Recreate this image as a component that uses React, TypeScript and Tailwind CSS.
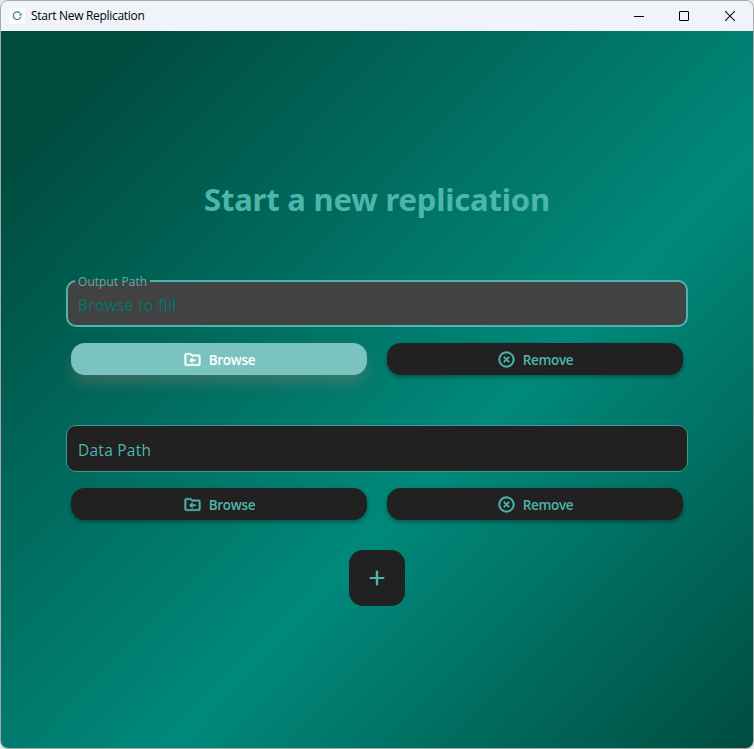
import type { ReactNode } from "react";

function FolderIcon() {
  return (
    <svg viewBox="0 0 24 24" className="size-[19px] shrink-0" fill="currentColor" stroke="currentColor" strokeWidth="0.5">
      <path d="M20 6h-8l-2-2H4c-1.1 0-2 .9-2 2v12c0 1.1.9 2 2 2h16c1.1 0 2-.9 2-2V8c0-1.1-.9-2-2-2zm0 12H4V6h5.17l2 2H20v10zm-8-1-4-4 4-4v3h4v2h-4z" />
    </svg>
  );
}

function RemoveIcon() {
  return (
    <svg viewBox="0 0 24 24" className="size-[19px] shrink-0" fill="currentColor" stroke="currentColor" strokeWidth="0.5">
      <path d="M14.59 8 12 10.59 9.41 8 8 9.41 10.59 12 8 14.59 9.41 16 12 13.41 14.59 16 16 14.59 13.41 12 16 9.41 14.59 8zM12 2C6.47 2 2 6.47 2 12s4.47 10 10 10 10-4.47 10-10S17.53 2 12 2zm0 18c-4.41 0-8-3.59-8-8s3.59-8 8-8 8 3.59 8 8-3.59 8-8 8z" />
    </svg>
  );
}

function PathButton({ icon, label, hovered = false }: { icon: ReactNode; label: string; hovered?: boolean }) {
  return (
    <button
      className={
        "flex h-8 w-[296px] items-center justify-center gap-[7px] rounded-[14px] text-[13.5px] leading-5 font-semibold " +
        (hovered
          ? "bg-[#7bc3bf] tracking-[-0.3px] text-white shadow-[0_9px_14px_-1px_rgba(130,122,115,0.42)]"
          : "bg-[#212121] tracking-[-0.3px] text-[#4db6ac] shadow-[0_2px_4px_rgba(0,0,0,0.35)]")
      }
    >
      {icon}
      <span className="relative top-px">{label}</span>
    </button>
  );
}

function ButtonRow({ hovered = false }: { hovered?: boolean }) {
  return (
    <div className="flex gap-5 px-[5px]">
      <PathButton icon={<FolderIcon />} label="Browse" hovered={hovered} />
      <PathButton icon={<RemoveIcon />} label="Remove" />
    </div>
  );
}

function TitleBar() {
  return (
    <header className="flex h-[30px] shrink-0 items-center bg-[#f0f3fa] pl-2 text-black">
      <span className="flex size-4 items-center justify-center bg-[#fbfcfd]">
        <svg viewBox="0 0 16 16" className="size-4" fill="none" stroke="#378486" strokeWidth="1.2">
          <path d="M10.9 5.2A3.8 3.8 0 1 0 11.8 8.6" />
          <path d="M12.6 4.6v2.8H9.8z" fill="#378486" stroke="none" />
        </svg>
      </span>
      <span className="ml-[6px] text-[12px] tracking-[-0.3px]">Start New Replication</span>
      <div className="ml-auto flex h-full pr-px">
        <span className="flex w-[45px] items-center justify-center"><i className="h-px w-[10px] bg-black" /></span>
        <span className="flex w-[46px] items-center justify-center"><i className="size-[10px] rounded-[1px] border border-black" /></span>
        <span className="flex w-[45px] items-center justify-center">
          <svg viewBox="0 0 10 10" className="size-[10px]" stroke="#111" strokeWidth="1.1"><path d="m0 0 10 10m0-10L0 10" /></svg>
        </span>
      </div>
    </header>
  );
}

export default function App() {
  return (
    <div className="h-[749px] w-[754px] bg-[#e8e8e8] font-['Open_Sans','Noto_Sans',sans-serif]">
      <div className="flex h-full flex-col overflow-hidden rounded-[8px] border border-[#a8a8a8]">
        <TitleBar />
        <main className="flex flex-1 flex-col items-center bg-[linear-gradient(134.5deg,#004d40_10%,#00897b_59.8%,#004d40_100%)]">
          <h1 className="mt-[146px] h-11 whitespace-nowrap font-['Noto_Sans',sans-serif] text-[31px] leading-[44px] font-bold tracking-[-0.2px] text-[#4db6ac]">
            Start a new replication
          </h1>
          <div className="mt-[59px] w-[622px]">
            <div className="relative flex h-[47px] items-center rounded-[10px] border-2 border-[#4db6ac] bg-[#424242] px-[10px]">
              <span className="absolute top-[-2px] left-[7px] h-[2px] w-[75px] bg-[#424242]" />
              <span className="absolute top-[-8px] left-[10px] text-[12px] leading-4 tracking-[0.05px] text-[#4db6ac]">Output Path</span>
              <span className="relative top-[2px] text-[15.5px] tracking-[0.35px] text-[#00796b]">Browse to fill</span>
            </div>
            <div className="mt-4">
              <ButtonRow hovered />
            </div>
            <div className="mt-[50px] flex h-[47px] items-center rounded-[10px] border border-[#399b91] bg-[#212121] px-[11px]">
              <span className="relative top-[2px] text-[15.5px] tracking-[0.25px] text-[#4db6ac]">Data Path</span>
            </div>
            <div className="mt-4">
              <ButtonRow />
            </div>
          </div>
          <button className="mt-[30px] flex size-14 items-center justify-center rounded-[14px] bg-[#212121] text-[#4db6ac]">
            <svg viewBox="0 0 24 24" className="size-6" fill="currentColor"><path d="M19.3 13.1h-6.1v6.2h-2.4v-6.2H4.7v-2.2h6.1V4.7h2.4v6.2h6.1z" /></svg>
          </button>
        </main>
      </div>
    </div>
  );
}
